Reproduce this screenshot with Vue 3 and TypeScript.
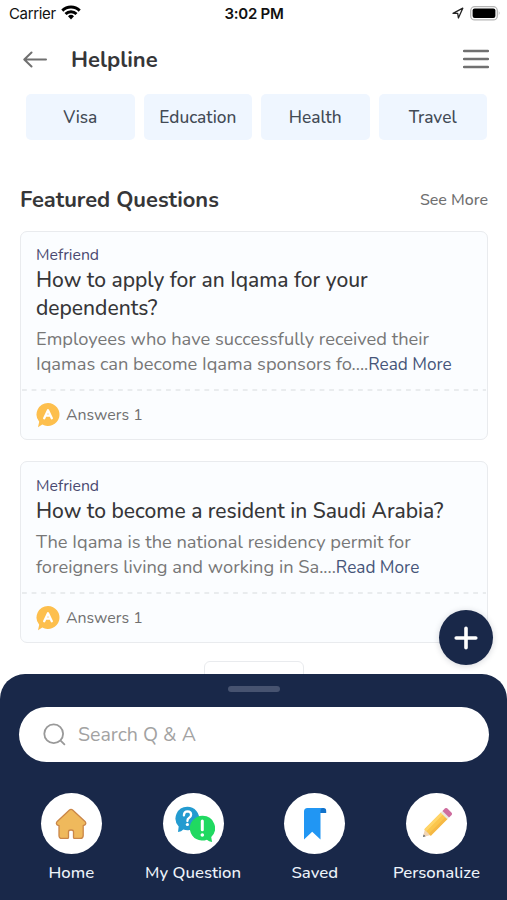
<script setup lang="ts">
interface Question {
  author: string
  title: string[]
  body: string[]
  answers: number
}

const categories: string[] = ['Visa', 'Education', 'Health', 'Travel']

const questions: Question[] = [
  {
    author: 'Mefriend',
    title: ['How to apply for an Iqama for your', 'dependents?'],
    body: ['Employees who have successfully received their', 'Iqamas can become Iqama sponsors fo....'],
    answers: 1,
  },
  {
    author: 'Mefriend',
    title: ['How to become a resident in Saudi Arabia?'],
    body: ['The Iqama is the national residency permit for', 'foreigners living and working in Sa....'],
    answers: 1,
  },
]

const tabs: string[] = ['Home', 'My Question', 'Saved', 'Personalize']
</script>

<template>
  <div class="screen">
    <div class="status">
      <div class="carrier">
        <span>Carrier</span>
        <svg width="20" height="15" viewBox="0 0 20 15">
          <g fill="none" stroke="#000" stroke-width="2.9">
            <path d="M1.3 5.6a12.4 12.4 0 0 1 17.4 0" />
            <path d="M4.5 9a7.8 7.8 0 0 1 11 0" />
          </g>
          <path d="M10 14.4l-3-3.1a4.3 4.3 0 0 1 6 0z" />
        </svg>
      </div>
      <div class="time">3:02 PM</div>
      <div class="indicators">
        <svg width="12" height="12" viewBox="0 0 12 12">
          <path d="M1 6.3L10.8 1.2L6.4 11L5.7 6.4z" fill="none" stroke="#222" stroke-width="1.3" stroke-linejoin="round" />
        </svg>
        <svg width="31" height="15" viewBox="0 0 31 15">
          <rect x=".7" y=".7" width="26.6" height="13.2" rx="4" fill="#fff" stroke="#b5b5b5" stroke-width="1.3" />
          <rect x="2.6" y="2.6" width="22.8" height="9.4" rx="2" />
          <path d="M28.8 5q1.8 2.2 0 4.6z" fill="#aaa" />
        </svg>
      </div>
    </div>

    <header class="header">
      <svg width="24" height="18" viewBox="0 0 24 18">
        <path d="M23 9.5H1.5M8.5 2.5L1.3 9.5L8.5 16.5" fill="none" stroke="#707070" stroke-width="2" stroke-linecap="round" stroke-linejoin="round" />
      </svg>
      <h1>Helpline</h1>
      <svg width="26" height="20" viewBox="0 0 26 20">
        <path d="M1 2h24M1 10h24M1 18h24" stroke="#707070" stroke-width="2.3" stroke-linecap="round" />
      </svg>
    </header>

    <nav class="chips">
      <button v-for="c in categories" :key="c" class="chip">{{ c }}</button>
    </nav>

    <div class="section">
      <h2>Featured Questions</h2>
      <a class="more">See More</a>
    </div>

    <main class="cards">
      <article v-for="(q, i) in questions" :key="i" class="card">
        <div class="content">
          <div class="author">{{ q.author }}</div>
          <h3>
            <span v-for="line in q.title" :key="line" class="line">{{ line }}</span>
          </h3>
          <p>
            <span class="line">{{ q.body[0] }}</span>
            <span class="line">{{ q.body[1] }}<a>Read More</a></span>
          </p>
        </div>
        <svg class="divider" width="466" height="2" viewBox="0 0 466 2">
          <path d="M1 1h464" stroke="#e3e6e9" stroke-width="1.5" stroke-dasharray="4.8 4.8" />
        </svg>
        <div class="answers">
          <svg width="24" height="26" viewBox="0 0 24 26">
            <path d="M12 1a11.5 11.5 0 1 1-5.7 21.5L2 25.2L3.2 19.8A11.5 11.5 0 0 1 12 1z" fill="#fdbf4d" />
            <path d="M8.2 16.2L12 8.2l3.8 8M9.8 13.7h4.4" fill="none" stroke="#fff" stroke-width="2.3" stroke-linecap="round" stroke-linejoin="round" />
          </svg>
          <span>Answers {{ q.answers }}</span>
        </div>
      </article>
      <button class="see-more">See More</button>
    </main>

    <button class="fab" aria-label="Ask a question">
      <svg width="24" height="24" viewBox="0 0 24 24">
        <path d="M12 2.2v19.6M2.2 12h19.6" stroke="#fff" stroke-width="3.6" stroke-linecap="round" />
      </svg>
    </button>

    <section class="sheet">
      <div class="handle"></div>
      <div class="search">
        <svg width="23" height="23" viewBox="0 0 23 23">
          <g fill="none" stroke="#999" stroke-width="1.8" stroke-linecap="round">
            <circle cx="10.7" cy="10.7" r="9.4" />
            <path d="M17.6 17.6l3.8 3.8" />
          </g>
        </svg>
        <span>Search Q &amp; A</span>
      </div>
      <div class="tabs">
        <div v-for="(t, i) in tabs" :key="t" class="tab">
          <div class="disc">
            <svg v-if="i === 0" width="32" height="32" viewBox="0 0 32 32">
              <path d="M14.2 2.2q1.8-1.7 3.7 0L30 13.4q2 2.7-1.2 4l-.6.3v9.7q0 3-3 3h-5.7q-1 0-1-1v-5.6q0-1.8-2.5-1.8t-2.5 1.8v5.6q0 1-1 1H7q-3 0-3-3v-9.7l-.8-.3q-3-1.3-1-4z" fill="#efb95c" stroke="#ca8648" stroke-width="1.3" stroke-linejoin="round" />
            </svg>
            <svg v-else-if="i === 1" class="bubbles" width="40" height="36" viewBox="0 0 40 36">
              <path d="M12.3.8a11.7 11.7 0 1 1-4 22.6Q6.5 25.5 3 26l.7-5.5A11.7 11.7 0 0 1 12.3.8z" fill="#239bd0" />
              <path d="M8.9 9.4q.2-4 3.7-4 3.5.1 3.5 3.4 0 2-2.2 3.2-1.5.8-1.5 3" fill="none" stroke="#fff" stroke-width="2.3" stroke-linecap="round" />
              <circle cx="12.4" cy="18.5" r="1.6" fill="#fff" />
              <path d="M27.5 9.8A12.3 12.3 0 0 1 36.2 31l.9 5q-3.3-.3-5.2-2.3A12.4 12.4 0 1 1 27.5 9.8z" fill="#20d961" />
              <path d="M27.3 15v8.8" stroke="#fff" stroke-width="3" stroke-linecap="round" />
              <circle cx="27.3" cy="29" r="1.8" fill="#fff" />
            </svg>
            <svg v-else-if="i === 2" width="24" height="34" viewBox="0 0 24 34">
              <path d="M17 1h3.5q2.7 0 2.7 2.8V6H17z" fill="#1272ca" />
              <path d="M4.5 1H20q-2.5 0-2.5 3v28.5L9.2 24.8L1 32.5v-28Q1 1 4.5 1z" fill="#2196f3" />
            </svg>
            <svg v-else width="32" height="32" viewBox="0 0 32 32">
              <g transform="translate(16 16) rotate(45) scale(.93) translate(-16 -16.2)">
                <path d="M11.4 28.5L16 36l4.6-7.5z" fill="#f1d5b5" />
                <path d="M14.5 33.5L16 36l1.5-2.5z" fill="#59636e" />
                <rect x="11.1" y="3" width="9.8" height="26" fill="#fbc64c" />
                <rect x="17.9" y="3" width="3" height="26" fill="#f5b845" />
                <rect x="11.1" y="3" width="3" height="26" fill="#ffd569" />
                <rect x="11" y="1.2" width="10" height="2.8" fill="#e9e6dc" />
                <path d="M11 1.3v-3.5q0-2 2-2h6q2 0 2 2v3.5z" fill="#ce6c9e" />
              </g>
            </svg>
          </div>
          <span>{{ t }}</span>
        </div>
      </div>
    </section>
  </div>
</template>

<style>
body {
  margin: 0;
}
</style>

<style scoped>
.screen {
  position: relative;
  width: 507px;
  height: 900px;
  overflow: hidden;
  background: #fff;
  color: #363638;
  font-family: Nunito, Lato, "Open Sans", sans-serif;
  display: flex;
  flex-direction: column;
}
button {
  font: inherit;
  border: 0;
  padding: 0;
}
h1, h2, h3, p {
  margin: 0;
}
svg {
  flex: none;
}
.status {
  height: 28px;
  flex: none;
  display: grid;
  grid-template-columns: 1fr auto 1fr;
  align-items: center;
  padding: 0 6px 0 9px;
  font: 15px/28px Inter, sans-serif;
  color: #111;
}
.carrier {
  display: flex;
  align-items: center;
  gap: 5px;
  letter-spacing: -0.35px;
}
.carrier svg {
  margin-top: -3px;
}
.time {
  margin-right: 2px;
  font-weight: 600;
  letter-spacing: -0.25px;
}
.indicators {
  display: flex;
  justify-content: flex-end;
  align-items: center;
  gap: 6px;
  margin-top: -2px;
}
.header {
  height: 62px;
  flex: none;
  display: flex;
  align-items: center;
  padding: 0 18px 0 23px;
}
.header h1 {
  flex: 1;
  margin-left: 24px;
  padding-top: 1px;
  font-size: 22px;
  font-weight: 700;
}
.chips {
  flex: none;
  display: grid;
  grid-template-columns: repeat(4, 1fr);
  gap: 9px;
  height: 46px;
  margin-top: 4px;
  padding: 0 20px 0 26px;
}
.chip {
  border-radius: 5px;
  background: #eff6ff;
  color: #424a55;
  font-size: 17.3px;
  font-weight: 500;
}
.section {
  flex: none;
  height: 30px;
  margin-top: 44px;
  padding: 0 19px 0 20px;
  display: flex;
  align-items: center;
  justify-content: space-between;
}
.section h2 {
  padding-top: 1px;
  font-size: 21.9px;
  font-weight: 700;
}
.more {
  padding-top: 1px;
  font-size: 16px;
  font-weight: 500;
  color: #707070;
}
.cards {
  margin-top: 17px;
  padding: 0 19px 0 20px;
  display: flex;
  flex-direction: column;
}
.card {
  border: 1px solid #e9ebee;
  border-radius: 7px;
  background: #fbfdff;
  margin-bottom: 21px;
}
.content {
  padding: 13px 15px 12px;
}
.line {
  display: block;
  white-space: nowrap;
}
.author {
  font-size: 15.8px;
  line-height: 20px;
  color: #49496f;
}
.card h3 {
  margin-top: 1px;
  font-size: 21px;
  line-height: 28px;
  font-weight: 500;
}
.card p {
  margin-top: 5px;
  font-size: 18.3px;
  line-height: 24.5px;
  color: #777;
}
.card + .card .content {
  padding-top: 14px;
}
.card p a {
  color: #465579;
  font-size: 17.2px;
}
.divider {
  display: block;
}
.answers {
  height: 47px;
  display: flex;
  align-items: center;
  gap: 6px;
  padding: 0 0 1px 15px;
  font-size: 15.9px;
  color: #707070;
}
.see-more {
  align-self: center;
  width: 100px;
  height: 38px;
  margin-top: -3px;
  border: 1px solid #e9ebee;
  border-radius: 6px;
  background: #fff;
  font-size: 15px;
}
.fab {
  position: absolute;
  left: 439px;
  top: 610px;
  width: 54px;
  height: 55px;
  border-radius: 50%;
  background: #192849;
  display: grid;
  place-items: center;
  box-shadow: 0 1px 6px rgba(20, 30, 50, 0.18);
}
.sheet {
  position: absolute;
  left: 0;
  right: 0;
  bottom: 0;
  height: 226px;
  border-radius: 25px 25px 0 0;
  background: #192849;
  display: flex;
  flex-direction: column;
}
.handle {
  width: 52px;
  height: 6px;
  border-radius: 3px;
  background: #475370;
  margin: 12px auto 0;
}
.search {
  height: 55px;
  margin: 15px 18px 0 19px;
  border-radius: 28px;
  background: #fff;
  display: flex;
  align-items: center;
  gap: 12px;
  padding-left: 24px;
  color: #a2a2a2;
  font-size: 19.6px;
}
.search span {
  padding-bottom: 1px;
}
.tabs {
  display: grid;
  grid-template-columns: repeat(4, 121.7px);
  padding-left: 10.5px;
  margin-top: 31px;
}
.tab {
  display: flex;
  flex-direction: column;
  align-items: center;
  color: #edf3fa;
  font-size: 16.8px;
  font-weight: 500;
  line-height: 24px;
  gap: 7px;
}
.disc {
  width: 61px;
  height: 61px;
  border-radius: 50%;
  background: #fff;
  display: grid;
  place-items: center;
}
.bubbles {
  margin-left: 3px;
}
</style>
